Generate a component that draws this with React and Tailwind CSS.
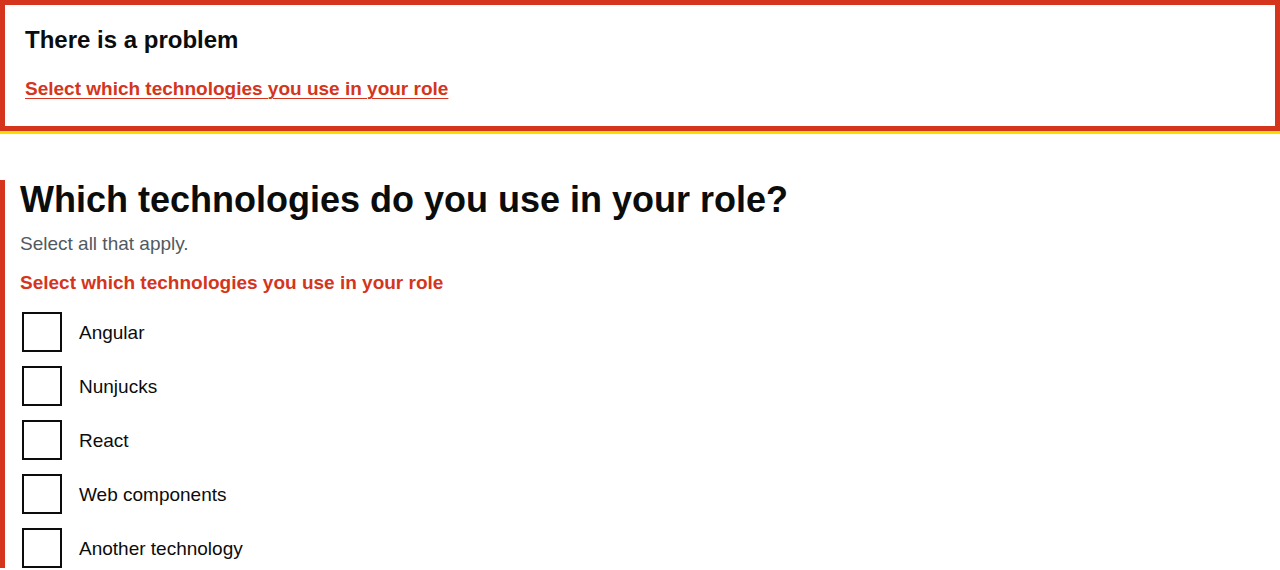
import React from 'react';

const options = ['Angular', 'Nunjucks', 'React', 'Web components', 'Another technology'];

export default function App() {
  return (
    <div className="min-h-[570px] bg-white text-[#0b0c0c] font-['Liberation_Sans',Arial,sans-serif]">
      {/* Error summary (focused) */}
      <div className="border-b-[3px] border-[#ffdd00]">
        <div className="border-[5px] border-[#d4351c] px-[20px] pt-[23px] pb-[24px]">
          <h2 className="text-[24px] leading-[24px] font-bold">There is a problem</h2>
          <ul className="mt-[24px]">
            <li>
              <a href="#technologies" className="text-[19px] leading-[25px] font-bold text-[#d4351c] underline decoration-1 underline-offset-[3px]">
                Select which technologies you use in your role
              </a>
            </li>
          </ul>
        </div>
      </div>

      {/* Form group with error */}
      <div className="mt-[46px] border-l-[5px] border-[#d4351c] pl-[15px]">
        <h1 className="text-[36px] leading-[40px] font-bold">Which technologies do you use in your role?</h1>
        <div className="mt-[11px] text-[19px] leading-[25px] text-[#505a5f]">Select all that apply.</div>
        <p id="technologies" className="mt-[14px] text-[19px] leading-[25px] font-bold text-[#d4351c]">
          Select which technologies you use in your role
        </p>
        <div className="mt-[17px] flex flex-col gap-[14px]">
          {options.map(o => (
            <label key={o} className="flex items-center gap-[17px]">
              <span className="ml-[2px] w-[40px] h-[40px] border-2 border-[#0b0c0c] bg-white" />
              <span className="text-[19px] leading-[25px]">{o}</span>
            </label>
          ))}
        </div>
      </div>
    </div>
  );
}
